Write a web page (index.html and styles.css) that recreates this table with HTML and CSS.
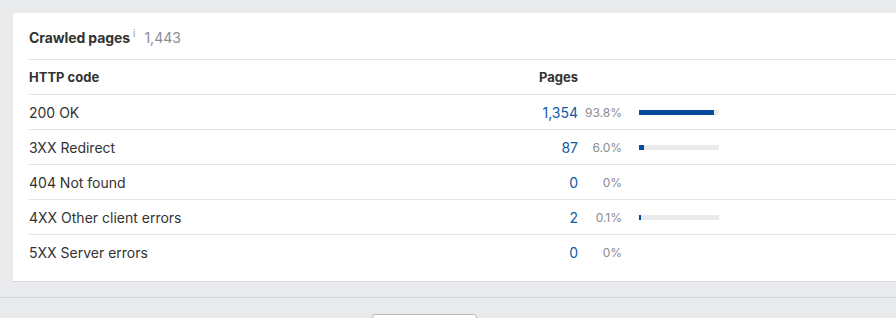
FILE: index.html
```html
<!DOCTYPE html>
<html>
<head>
<meta charset="utf-8">
<link rel="stylesheet" href="styles.css">
</head>
<body>
<div class="page">
  <section class="card">
    <div class="title-row">
      <span class="title">Crawled pages</span><sup class="info">i</sup>
      <span class="total">1,443</span>
    </div>
    <div class="table">
      <div class="row head">
        <div class="c-code">HTTP code</div>
        <div class="c-pages">Pages</div>
        <div class="c-pct"></div>
        <div class="c-bar"></div>
      </div>
      <div class="row">
        <div class="c-code">200 OK</div>
        <div class="c-pages num">1,354</div>
        <div class="c-pct">93.8%</div>
        <div class="c-bar"><div class="track"><div class="fill" style="width:93.8%"></div></div></div>
      </div>
      <div class="row">
        <div class="c-code">3XX Redirect</div>
        <div class="c-pages num">87</div>
        <div class="c-pct">6.0%</div>
        <div class="c-bar"><div class="track"><div class="fill" style="width:6%"></div></div></div>
      </div>
      <div class="row">
        <div class="c-code">404 Not found</div>
        <div class="c-pages num">0</div>
        <div class="c-pct">0%</div>
        <div class="c-bar"></div>
      </div>
      <div class="row">
        <div class="c-code">4XX Other client errors</div>
        <div class="c-pages num">2</div>
        <div class="c-pct">0.1%</div>
        <div class="c-bar"><div class="track"><div class="fill" style="width:2px"></div></div></div>
      </div>
      <div class="row last">
        <div class="c-code">5XX Server errors</div>
        <div class="c-pages num">0</div>
        <div class="c-pct">0%</div>
        <div class="c-bar"></div>
      </div>
    </div>
  </section>
  <div class="footer">
    <div class="btn"></div>
  </div>
</div>
</body>
</html>
```
FILE: styles.css
```css
* { box-sizing: border-box; }
html, body { margin: 0; padding: 0; }
body {
  background: #e9eaec;
  font-family: Inter, "Noto Sans", sans-serif;
  color: #333;
  width: 896px;
  height: 318px;
  overflow: hidden;
}
.page { padding-top: 13px; height: 318px; overflow: hidden; }
.card {
  margin-left: 13px;
  background: #fff;
  height: 268px;
  padding: 0 0 0 16px;
  box-shadow: 0 1px 0 #d6d7da;
}
.title-row {
  height: 47px;
  display: flex;
  align-items: center;
  padding-top: 2px;
  border-bottom: 1px solid #e4e5e8;
}
.title {
  font-weight: 700;
  font-size: 14px;
  color: #333;
  letter-spacing: -0.1px;
}
.info {
  font-size: 10px;
  color: #999;
  margin-left: 3px;
  align-self: flex-start;
  margin-top: 13px;
  line-height: 1;
}
.total {
  font-size: 14px;
  color: #8a8c92;
  margin-left: 9px;
}
.row {
  display: flex;
  align-items: center;
  height: 35px;
  border-bottom: 1px solid #e4e5e8;
  font-size: 14px;
}
.row.head { font-weight: 700; font-size: 13px; }
.row.last { border-bottom: none; }
.c-code { width: 440px; }
.c-pages { width: 109px; text-align: right; }
.num { color: #0f5ba7; }
.c-pct {
  width: 44px;
  text-align: right;
  font-size: 12px;
  color: #8a8c92;
}
.c-bar { padding-left: 17px; }
.track {
  width: 80px;
  height: 5px;
  background: #e9eaec;
  margin-top: 1px;
}
.fill { height: 5px; background: #054a9b; }
.footer {
  margin-top: 16px;
  border-top: 1px solid #d3d4d7;
  height: 40px;
  display: flex;
  padding: 16px 0 0 372px;
}
.btn {
  width: 105px;
  height: 20px;
  background: #fff;
  border: 1px solid #b9babd;
  border-radius: 3px;
}
```
